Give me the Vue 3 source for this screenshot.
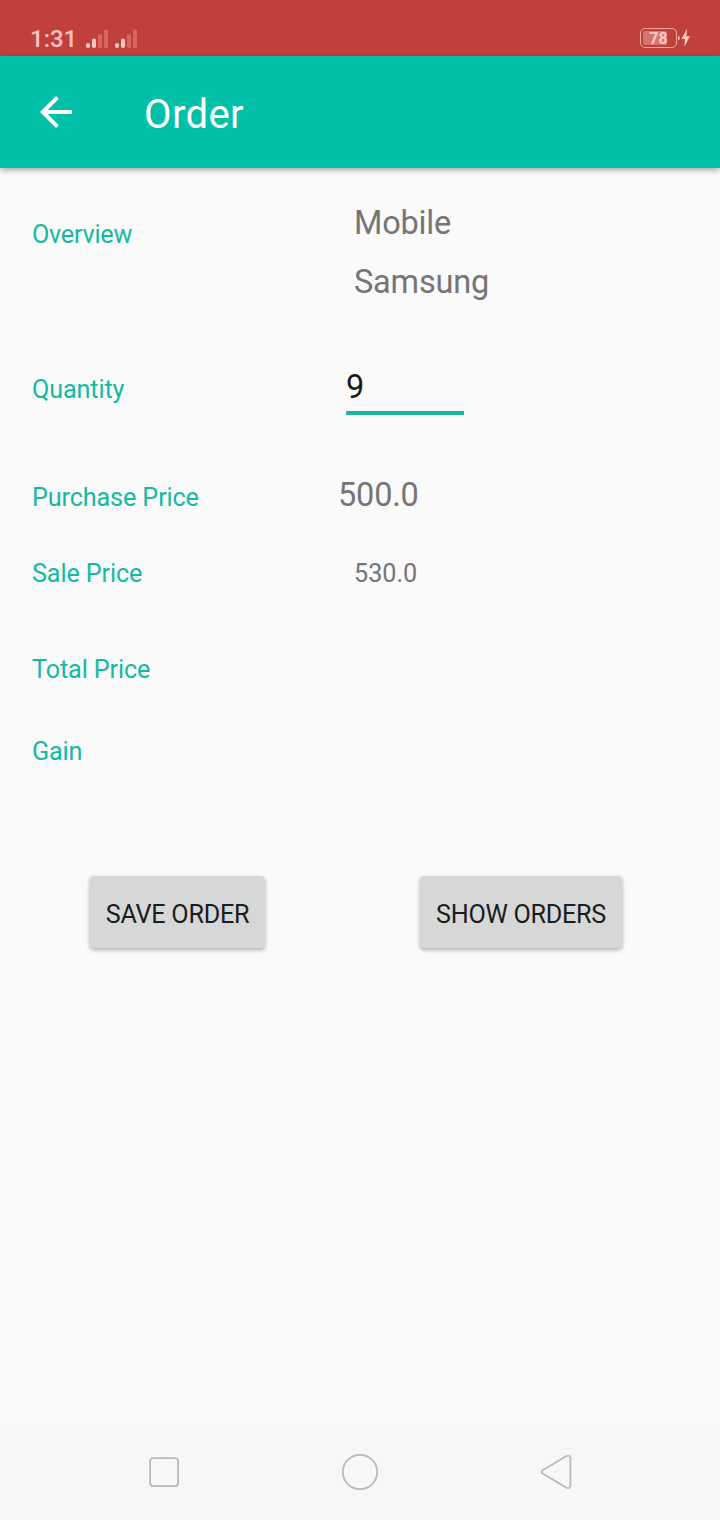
<template>
  <div class="screen">
    <header class="status-bar">
      <div class="status-left">
        <span class="clock">1:31</span>
        <svg v-for="sim in 2" :key="sim" class="signal" width="23" height="19" viewBox="0 0 23 19">
          <rect x="0" y="14" width="4" height="5" rx="2" />
          <rect x="6" y="9.5" width="4" height="9.5" rx="2" />
          <rect class="weak" x="12" y="5" width="4" height="14" rx="1.5" />
          <rect class="weak" x="18" y="0.5" width="4" height="18.5" rx="1.5" />
        </svg>
      </div>
      <div class="battery">
        <span class="battery-body">
          <span class="battery-fill" :style="{ width: battery + '%' }"></span>
          <span class="battery-text">{{ battery }}</span>
        </span>
        <svg width="13" height="20" viewBox="0 0 13 20">
          <rect x="1" y="8" width="1.6" height="4" rx="0.8" />
          <path d="M10 0.5 L4.6 11 H8 L7.4 19 L12.8 8.2 H9.4 Z" />
        </svg>
      </div>
    </header>

    <div class="toolbar">
      <button class="back-btn" aria-label="Back">
        <svg width="48" height="48" viewBox="0 0 24 24">
          <path d="M20 11H7.83l5.59-5.59L12 4l-8 8 8 8 1.41-1.41L7.83 13H20v-2z" />
        </svg>
      </button>
      <h1>Order</h1>
    </div>

    <main class="form">
      <div class="row overview">
        <span class="label">Overview</span>
        <div class="product">
          <span class="value large">{{ order.name }}</span>
          <span class="value large">{{ order.supplier }}</span>
        </div>
      </div>
      <div class="row quantity">
        <label class="label" for="quantity">Quantity</label>
        <input id="quantity" v-model="order.quantity" class="qty-input" type="text" />
      </div>
      <div class="row purchase">
        <span class="label">Purchase Price</span>
        <span class="value large">{{ order.purchasePrice }}</span>
      </div>
      <div class="row sale">
        <span class="label">Sale Price</span>
        <span class="value">{{ order.salePrice }}</span>
      </div>
      <div class="row total">
        <span class="label">Total Price</span>
      </div>
      <div class="row gain">
        <span class="label">Gain</span>
      </div>
      <div class="actions">
        <button class="btn save">SAVE ORDER</button>
        <button class="btn show">SHOW ORDERS</button>
      </div>
    </main>

    <nav class="nav-bar">
      <svg width="40" height="40" viewBox="0 0 40 40">
        <rect x="6.1" y="6.1" width="28" height="28" rx="3" />
      </svg>
      <svg width="40" height="40" viewBox="0 0 40 40">
        <circle cx="20" cy="20" r="17.2" />
      </svg>
      <svg width="40" height="40" viewBox="0 0 40 40">
        <path d="M7 18 L30.5 4 Q34.4 2.6 34.4 6.5 V33 Q34.4 37.2 30.5 35.8 L7 21.8 Q4 20 7 18 Z" />
      </svg>
    </nav>
  </div>
</template>

<script setup>
import { ref, reactive } from 'vue';

const battery = ref(78);

const order = reactive({
  name: 'Mobile',
  supplier: 'Samsung',
  quantity: '9',
  purchasePrice: '500.0',
  salePrice: '530.0'
});
</script>

<style>
body {
  margin: 0;
  background: #fafafa;
}
</style>

<style scoped>
.screen {
  display: flex;
  flex-direction: column;
  width: 720px;
  height: 1520px;
  background: #fafafa;
  font-family: Roboto, "Liberation Sans", sans-serif;
  overflow: hidden;
}

/* Status bar */
.status-bar {
  display: flex;
  justify-content: space-between;
  box-sizing: border-box;
  height: 56px;
  padding: 24px 30px 0;
  background: #c0413b;
  color: #fbc4c0;
}

.status-left {
  display: flex;
  align-items: flex-start;
}

.clock {
  width: 56px;
  font-size: 24px;
  font-weight: 500;
  line-height: 30px;
}

.signal {
  margin: 5px 6px 0 0;
  fill: #ffc9c4;
}

.signal .weak {
  fill: #d6665f;
}

.battery {
  display: flex;
  align-items: flex-start;
  padding-top: 4px;
}

.battery svg {
  fill: #fbc4c0;
}

.battery-body {
  display: flex;
  position: relative;
  box-sizing: border-box;
  width: 37px;
  height: 20px;
  padding: 2px;
  border: 1.5px solid #f0a8a3;
  border-radius: 5px;
}

.battery-fill {
  border-radius: 2px;
  background: #d6756f;
}

.battery-text {
  position: absolute;
  inset: 0;
  font-size: 16px;
  font-weight: 700;
  line-height: 19px;
  text-align: center;
  color: #fcc8c3;
}

/* Toolbar */
.toolbar {
  display: flex;
  align-items: center;
  flex: none;
  z-index: 1;
  height: 112px;
  background: #02c0a8;
  box-shadow: 0 2px 6px rgba(0, 0, 0, 0.35);
}

.back-btn {
  width: 144px;
  height: 112px;
  padding: 0 0 0 32px;
  border: none;
  background: none;
  text-align: left;
}

.back-btn svg {
  display: block;
  fill: #fff;
}

.toolbar h1 {
  margin: 6px 0 0;
  font-size: 40px;
  font-weight: 400;
  line-height: 48px;
  letter-spacing: 0.4px;
  color: #fff;
}

/* Form */
.form {
  flex: 1;
  padding: 36px 0 0 32px;
}

.row {
  display: grid;
  grid-template-columns: 322px 1fr;
  align-items: start;
}

.label,
.value {
  padding-top: 1px;
  font-size: 25.2px;
  line-height: 30px;
}

.label {
  letter-spacing: -0.12px;
  color: #14b9a0;
}

.value {
  color: #757575;
}

.value.large {
  padding-top: 0;
  font-size: 32.5px;
  line-height: 38px;
  letter-spacing: -0.2px;
}

.overview {
  height: 164px;
}

.overview .label {
  padding-top: 16px;
  letter-spacing: -0.25px;
}

.product {
  display: flex;
  flex-direction: column;
  gap: 21px;
}

.quantity {
  grid-template-columns: 314px 1fr;
  height: 108px;
}

.quantity .label {
  padding-top: 7px;
}

.qty-input {
  box-sizing: border-box;
  width: 118px;
  height: 47px;
  padding: 0 0 5px;
  border: none;
  border-bottom: 4px solid #1db5a2;
  outline: none;
  background: transparent;
  font-family: inherit;
  font-size: 32.5px;
  line-height: 38px;
  color: #1a1a1a;
}

.purchase {
  grid-template-columns: 306px 1fr;
  height: 82px;
}

.purchase .label {
  padding-top: 7px;
}

.sale {
  height: 96px;
}

.total {
  height: 82px;
}

.gain {
  height: 140px;
}

.actions {
  display: flex;
  gap: 155px;
  padding-left: 58px;
}

.btn {
  height: 72px;
  padding: 4px 0 0;
  border: none;
  border-radius: 4px;
  background: #d6d8d7;
  box-shadow: 0 2px 4px rgba(0, 0, 0, 0.3);
  font-family: inherit;
  font-size: 25.2px;
  letter-spacing: -0.28px;
  color: #1b1c1c;
}

.save {
  width: 175px;
}

.show {
  width: 202px;
}

/* System navigation */
.nav-bar {
  display: flex;
  align-items: center;
  gap: 156px;
  box-sizing: border-box;
  height: 96px;
  padding-left: 144px;
  background: #f7f7f7;
}

.nav-bar svg {
  fill: none;
  stroke: #bababa;
  stroke-width: 1.8;
}
</style>
